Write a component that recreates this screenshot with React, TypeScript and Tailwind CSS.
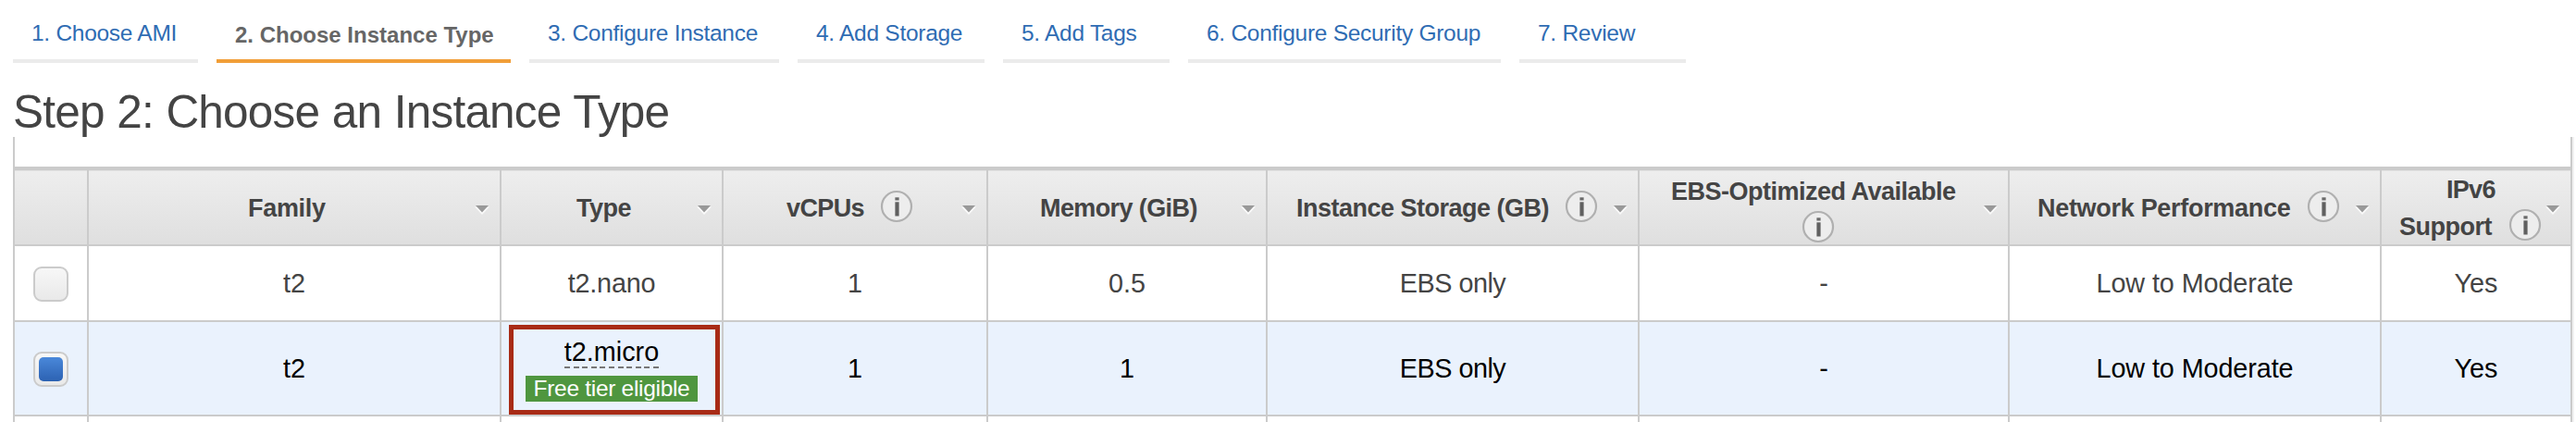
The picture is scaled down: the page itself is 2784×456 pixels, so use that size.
import type { ReactNode } from "react";

type Step = { label: string; width: string; active?: boolean };

const steps: Step[] = [
  { label: "1. Choose AMI", width: "w-[200px]" },
  { label: "2. Choose Instance Type", width: "w-[318px]", active: true },
  { label: "3. Configure Instance", width: "w-[270px]" },
  { label: "4. Add Storage", width: "w-[202px]" },
  { label: "5. Add Tags", width: "w-[180px]" },
  { label: "6. Configure Security Group", width: "w-[338px]" },
  { label: "7. Review", width: "w-[180px]" },
];

const columns =
  "grid grid-cols-[80px_446px_240px_286px_302px_402px_400px_402px_204px]";

function InfoIcon() {
  return (
    <svg width="36" height="36" viewBox="0 0 36 36" className="block shrink-0">
      <circle cx="18" cy="18" r="16" fill="#ededed" stroke="#b0b0b0" strokeWidth="2.2" />
      <rect x="16.4" y="8.3" width="4.2" height="3.2" fill="#6a6a6a" />
      <rect x="16.4" y="13.3" width="4.2" height="15.2" fill="#606060" />
    </svg>
  );
}

function SortArrow() {
  return (
    <svg width="16" height="12" viewBox="0 0 16 12" className="block">
      <path d="M0 2.5H16L8 11Z" fill="#fafafa" />
      <path d="M1 1H15L8 8.5Z" fill="#999" />
    </svg>
  );
}

function HeaderCell({ children, className }: { children: ReactNode; className: string }) {
  return (
    <div className="flex border-r-2 border-[#cbcbcb] last:border-r-0">
      <div className={`min-w-0 flex-1 whitespace-nowrap ${className}`}>{children}</div>
      <div className="w-0">
        <div className="ml-[-27px] mt-[37px] w-4">
          <SortArrow />
        </div>
      </div>
    </div>
  );
}

function Checkbox({ checked }: { checked?: boolean }) {
  return (
    <div className="mt-0.5 flex h-[38px] w-[38px] items-center justify-center rounded-[9px] border-2 border-[#cbcbcb] bg-linear-to-b from-[#f7f7f7] to-[#e9e9e9]">
      {checked && (
        <div className="h-[26px] w-[26px] rounded-[5px] bg-linear-to-b from-[#4a88da] to-[#2c62b2]" />
      )}
    </div>
  );
}

function Cell({ children }: { children?: ReactNode }) {
  return (
    <div className="flex items-center justify-center border-r-2 border-[#cbcbcb] last:border-r-0">
      {children}
    </div>
  );
}

export default function App() {
  return (
    <div className="flex h-[456px] w-[2784px] flex-col overflow-hidden bg-white font-['Liberation_Sans',Arial,sans-serif] text-[#444]">
      <nav className="flex h-[68px] shrink-0 gap-5 pl-[14px]">
        {steps.map((s) => (
          <div
            key={s.label}
            className={`h-[68px] shrink-0 whitespace-nowrap border-b-4 pl-5 leading-[28px] ${s.width} ${
              s.active
                ? "border-[#f19e38] pt-6 text-[24px] font-bold text-[#666]"
                : "border-[#ebebeb] pt-[22px] text-[24.5px] tracking-[-0.28px] text-[#2f6cb3]"
            }`}
          >
            {s.label}
          </div>
        ))}
      </nav>
      <h1 className="h-20 shrink-0 pl-[14px] pt-[25px] text-[49.5px] leading-[56px] tracking-[-0.8px] [word-spacing:0.6px]">
        Step 2: Choose an Instance Type
      </h1>
      <div className="ml-[14px] w-[2768px] border-l-2 border-r-2 border-l-[#cbcbcb] border-r-[#f1f1f1]">
        <div className="border-r-2 border-[#cbcbcb]">
          <div className="h-8" />
          <div
            className={`${columns} h-[86px] border-b-2 border-t-4 border-[#cbcbcb] bg-linear-to-b from-[#eee] to-[#dfdfdf] text-[27px] font-bold leading-[40px] shadow-[inset_0_1px_#e2e2e2]`}
          >
            <div className="border-r-2 border-[#cbcbcb]" />
            <HeaderCell className="pl-[172px] pt-[21px] tracking-[-0.3px]">Family</HeaderCell>
            <HeaderCell className="pl-[81px] pt-[21px] tracking-[-0.5px]">Type</HeaderCell>
            <HeaderCell className="flex pl-[68px] pt-[21px] tracking-[-0.6px]">
              <span className="w-[101px]">vCPUs</span>
              <InfoIcon />
            </HeaderCell>
            <HeaderCell className="pl-[56px] pt-[21px] tracking-[-0.6px]">Memory (GiB)</HeaderCell>
            <HeaderCell className="flex pl-[31px] pt-[21px] tracking-[-0.5px]">
              <span className="w-[290px]">Instance Storage (GB)</span>
              <InfoIcon />
            </HeaderCell>
            <HeaderCell className="pl-[34px] pt-[3px] tracking-[-0.5px]">
              EBS-Optimized Available
              <div className="ml-[141px]">
                <InfoIcon />
              </div>
            </HeaderCell>
            <HeaderCell className="flex pl-[30px] pt-[21px] tracking-[-0.3px]">
              <span className="w-[291px]">Network Performance</span>
              <InfoIcon />
            </HeaderCell>
            <HeaderCell className="pt-[1px] tracking-[-0.5px]">
              <div className="pl-[70px] tracking-[-0.7px]">IPv6</div>
              <div className="flex pl-[19px]">
                <span className="w-[118px]">Support</span>
                <InfoIcon />
              </div>
            </HeaderCell>
          </div>
          <div className={`${columns} h-[82px] border-b-2 border-[#cbcbcb] text-[28.8px] leading-[34px]`}>
            <Cell>
              <Checkbox />
            </Cell>
            <Cell>t2</Cell>
            <Cell>
              <span className="tracking-[-0.2px]">t2.nano</span>
            </Cell>
            <Cell>1</Cell>
            <Cell>0.5</Cell>
            <Cell>
              <span className="tracking-[-0.5px]">EBS only</span>
            </Cell>
            <Cell>-</Cell>
            <Cell>
              <span className="tracking-[-0.1px]">Low to Moderate</span>
            </Cell>
            <Cell>Yes</Cell>
          </div>
          <div
            className={`${columns} h-[102px] border-b-2 border-[#cbcbcb] bg-[#eaf2fd] text-[28.8px] leading-[34px] text-black`}
          >
            <Cell>
              <Checkbox checked />
            </Cell>
            <Cell>t2</Cell>
            <Cell>
              <div className="ml-[6px] mt-[3px] flex h-[97px] w-[228px] flex-col items-center border-[5px] border-[#a82b16] pr-[6px] pt-[7px]">
                <div className="h-[33px]">t2.micro</div>
                <div className="h-0.5 w-[102px] bg-[repeating-linear-gradient(90deg,#777_0_6px,transparent_6px_9.6px)]" />
                <div className="mt-2 h-7 w-[186px] bg-[#4f963f] text-center text-[24.5px] leading-7 tracking-[-0.3px] text-white">
                  Free tier eligible
                </div>
              </div>
            </Cell>
            <Cell>1</Cell>
            <Cell>1</Cell>
            <Cell>
              <span className="tracking-[-0.5px]">EBS only</span>
            </Cell>
            <Cell>-</Cell>
            <Cell>
              <span className="tracking-[-0.1px]">Low to Moderate</span>
            </Cell>
            <Cell>Yes</Cell>
          </div>
          <div className={`${columns} h-[6px]`}>
            <Cell />
            <Cell />
            <Cell />
            <Cell />
            <Cell />
            <Cell />
            <Cell />
            <Cell />
            <Cell />
          </div>
        </div>
      </div>
    </div>
  );
}
